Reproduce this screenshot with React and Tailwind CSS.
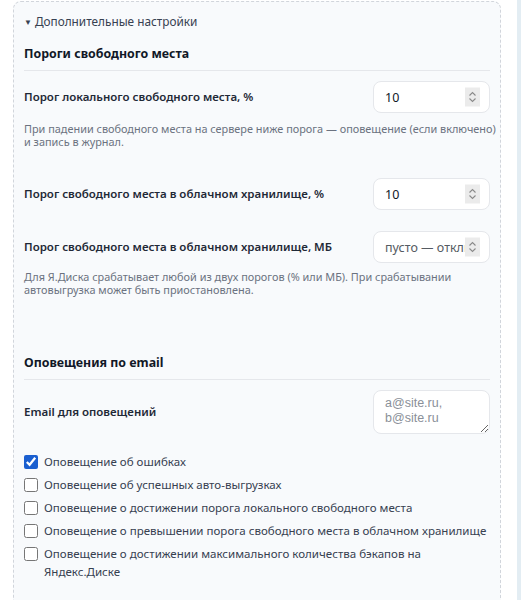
import React from "react";

const font = { fontFamily: "'Noto Sans', 'Open Sans', sans-serif" };

function Spinner() {
  return (
    <span className="pointer-events-none absolute right-[10px] top-1/2 -translate-y-1/2 flex h-[19px] w-[15px] items-center justify-center bg-[#ebebeb]">
      <svg width="9" height="13" viewBox="0 0 9 13" fill="none" stroke="#8a8a8a" strokeWidth="1.1">
        <path d="M1.5 5 L4.5 2 L7.5 5" />
        <path d="M1.5 8 L4.5 11 L7.5 8" />
      </svg>
    </span>
  );
}

function NumberRow({ label, value, placeholder, className }) {
  return (
    <div className={"flex items-center justify-between " + (className || "")}>
      <label className="text-[11.5px] font-semibold text-[#1f2937]">{label}</label>
      <div className="relative">
        <input
          type="text"
          defaultValue={value}
          placeholder={placeholder}
          className="block w-[117px] h-[32px] rounded-lg border border-[#e5e7eb] bg-white pl-[11px] pr-[24px] text-[12.5px] text-[#111827] placeholder:text-[#555b63] outline-none"
        />
        <Spinner />
      </div>
    </div>
  );
}

function Hint({ children, className }) {
  return (
    <p className={"mr-[-10px] text-[10.9px] leading-[13px] text-[#6b7280] " + (className || "")}>
      {children}
    </p>
  );
}

function Check({ label, checked }) {
  return (
    <label className="flex items-start gap-[6px] text-[11.55px] leading-[18px] text-[#374151]">
      <input
        type="checkbox"
        defaultChecked={checked}
        className="m-0 mt-[2px] w-[14px] h-[14px] shrink-0 accent-[#1a5fd0]"
      />
      <span>{label}</span>
    </label>
  );
}

export default function App() {
  const checks = [
    ["Оповещение об ошибках", true],
    ["Оповещение об успешных авто-выгрузках", false],
    ["Оповещение о достижении порога локального свободного места", false],
    ["Оповещение о превышении порога свободного места в облачном хранилище", false],
    ["Оповещение о достижении максимального количества бэкапов на Яндекс.Диске", false],
  ];

  return (
    <div className="flex min-h-screen bg-white" style={font}>
      <div className="ml-[13px] mt-px w-[488px] rounded-t-lg border border-b-0 border-dashed border-[#d1d5db] bg-[#f8fafc] px-[10px] pt-[9px] pb-6">
        <div className="text-[11.8px] leading-5 text-[#374151]">
          <span className="text-[8px] mr-[3px] align-[1px]">▼</span>Дополнительные настройки
        </div>

        <h3 className="mt-3 pb-[6px] border-b border-[#e5e7eb] text-[12.4px] leading-5 font-bold text-[#111827]">
          Пороги свободного места
        </h3>

        <NumberRow className="mt-[10px]" label="Порог локального свободного места, %" value="10" />
        <Hint className="mt-[9px]">
          При падении свободного места на сервере ниже порога — оповещение (если включено) и запись в журнал.
        </Hint>

        <NumberRow className="mt-[30px]" label="Порог свободного места в облачном хранилище, %" value="10" />
        <NumberRow className="mt-[21px]" label="Порог свободного места в облачном хранилище, МБ" placeholder="пусто — отключено" />
        <Hint className="mt-[7px]">
          Для Я.Диска срабатывает любой из двух порогов (% или МБ). При срабатывании автовыгрузка может быть приостановлена.
        </Hint>

        <h3 className="mt-[57px] pb-[6px] border-b border-[#e5e7eb] text-[12.4px] leading-5 font-bold text-[#111827]">
          Оповещения по email
        </h3>

        <div className="mt-[10px] flex items-center justify-between">
          <label className="text-[11.5px] font-semibold text-[#1f2937]">Email для оповещений</label>
          <textarea
            placeholder={"a@site.ru,\nb@site.ru"}
            className="w-[117px] h-[44px] rounded-lg border border-[#e5e7eb] bg-white pl-[11px] pt-[5px] text-[12.5px] leading-[15px] font-['Liberation_Sans',Arial,sans-serif] placeholder:text-[#8a8f98] outline-none"
          />
        </div>

        <div className="mt-[19px] flex flex-col gap-[5px]">
          {checks.map(([label, checked]) => (
            <Check key={label} label={label} checked={checked} />
          ))}
        </div>
      </div>
      <div className="ml-auto w-[4px] bg-[#e3edf3]" />
    </div>
  );
}
